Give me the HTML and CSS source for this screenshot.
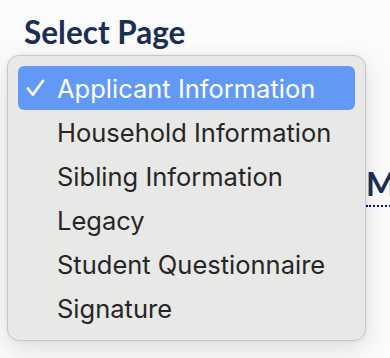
FILE: index.html
```html
<!DOCTYPE html>
<html lang="en">
<head>
    <meta charset="UTF-8">
    <meta name="viewport" content="width=device-width, initial-scale=1.0">
    <title>Select Page</title>
    <link rel="stylesheet" href="styles.css">
</head>
<body>

    <!-- Page picker label -->
    <h2 class="picker-label">Select Page</h2>

    <!-- Section title that sits under the open menu -->
    <div class="section-title"><span>My Application</span></div>

    <!-- Open native-style popup menu -->
    <ul class="page-menu">
        <li class="menu-item selected">
            <svg class="check" width="19" height="18" viewBox="0 0 19 18">
                <polyline points="1.8,9.5 6.8,15.8 17,1.8" fill="none" stroke="#fff" stroke-width="2.6" stroke-linecap="round" stroke-linejoin="round"/>
            </svg>
            Applicant Information
        </li>
        <li class="menu-item">Household Information</li>
        <li class="menu-item">Sibling Information</li>
        <li class="menu-item">Legacy</li>
        <li class="menu-item">Student Questionnaire</li>
        <li class="menu-item">Signature</li>
    </ul>

</body>
</html>
```

FILE: styles.css
```css
/* General body styling */
body {
    margin: 0;
    padding: 0;
    background-color: #fbfbfb;
    font-family: 'Lato', sans-serif;
    position: relative;
    height: 358px;
    overflow: hidden;
}

/* Label above the menu */
.picker-label {
    margin: 0;
    padding: 12px 0 0 24px;
    font-size: 31.5px;
    font-weight: bold;
    line-height: 40px;
    color: #1b2e54;
}

/* Title behind the popup */
.section-title {
    margin-top: 112px;
    padding-left: 366px;
    width: 24px;
    overflow: hidden;
    white-space: nowrap;
    font-size: 32px;
    font-weight: bold;
    line-height: 40px;
    color: #1b2e54;
}

.section-title span {
    display: inline-block;
    line-height: 36px;
    padding-bottom: 3px;
    border-bottom: 2px dotted #0a0e8a;
}

/* Popup menu */
.page-menu {
    position: absolute;
    left: 7px;
    top: 55px;
    width: 337px;
    margin: 0;
    padding: 10px;
    list-style: none;
    background-color: #e8e8e7;
    border: 1px solid #c6c6c6;
    border-radius: 12px;
    box-shadow: 0 8px 24px rgba(0, 0, 0, 0.12), 0 0 4px rgba(0, 0, 0, 0.05);
    font-family: 'Inter', sans-serif;
}

.menu-item {
    display: flex;
    align-items: center;
    height: 44px;
    padding-left: 39px;
    border-radius: 6px;
    font-size: 25.5px;
    color: #262626;
    position: relative;
}

.menu-item.selected {
    background-color: #6299f6;
    color: white;
}

.check {
    position: absolute;
    left: 8px;
    top: 13px;
}
```
